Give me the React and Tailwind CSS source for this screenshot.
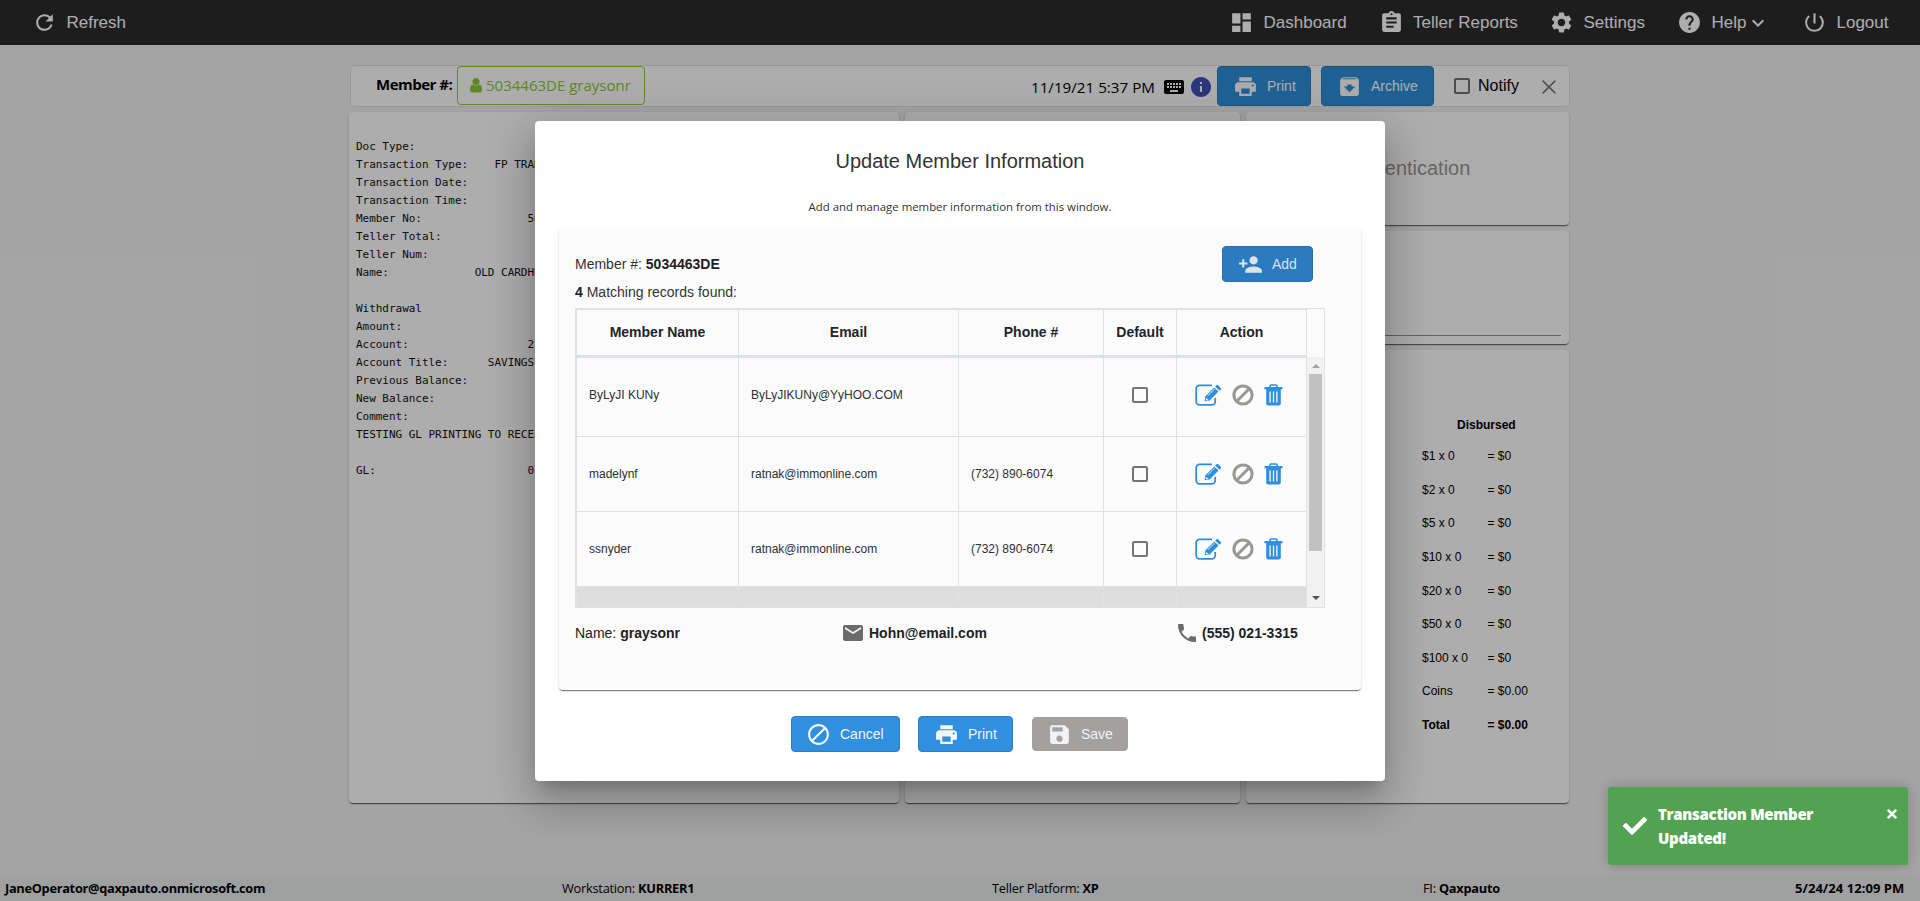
import React from 'react';
import {
  MdRefresh, MdDashboard, MdAssignment, MdSettings, MdHelp, MdExpandMore, MdPowerSettingsNew,
  MdKeyboard, MdInfo, MdPrint, MdArchive, MdPersonAdd, MdBlock, MdSave, MdEmail, MdPhone,
} from 'react-icons/md';
import { FaCheck, FaTimes } from 'react-icons/fa';

const receipt = [
  'Doc Type:',
  'Transaction Type:    FP TRAN',
  'Transaction Date:',
  'Transaction Time:',
  'Member No:                50',
  'Teller Total:',
  'Teller Num:',
  'Name:             OLD CARDHO',
  '',
  'Withdrawal',
  'Amount:',
  'Account:                  2',
  'Account Title:      SAVINGS',
  'Previous Balance:',
  'New Balance:',
  'Comment:',
  'TESTING GL PRINTING TO RECEI',
  '',
  'GL:                       0',
].join('\n');

const cash = [
  ['$1 x 0', '= $0'],
  ['$2 x 0', '= $0'],
  ['$5 x 0', '= $0'],
  ['$10 x 0', '= $0'],
  ['$20 x 0', '= $0'],
  ['$50 x 0', '= $0'],
  ['$100 x 0', '= $0'],
  ['Coins', '= $0.00'],
];

const members = [
  { name: 'ByLyJI KUNy', email: 'ByLyJIKUNy@YyHOO.COM', phone: '', h: 'h-[79px]', pad: 'pb-[5px]' },
  { name: 'madelynf', email: 'ratnak@immonline.com', phone: '(732) 890-6074', h: 'h-[75px]', pad: '' },
  { name: 'ssnyder', email: 'ratnak@immonline.com', phone: '(732) 890-6074', h: 'h-[75px]', pad: '' },
];

const COLS = 'grid grid-cols-[162px_220px_145px_73px_130px]';
const CARD = 'rounded-[4px] bg-white shadow-[0_2px_1px_-1px_rgba(0,0,0,0.4),0_1px_1px_0_rgba(0,0,0,0.25),0_1px_3px_0_rgba(0,0,0,0.14)]';
const SEGOE = "font-['Open_Sans','Noto_Sans',sans-serif]";

function NavItem({ icon: Icon, label, width, children }) {
  return (
    <div className={`flex shrink-0 items-center ${width}`}>
      <Icon size={25} className="shrink-0" />
      <span className="ml-[9.5px] whitespace-nowrap text-[17px] leading-6">{label}</span>
      {children}
    </div>
  );
}

function UserIcon() {
  return (
    <svg width="12" height="14.4" viewBox="256 128 1280 1536" fill="currentColor" className="shrink-0">
      <path d="M1536 1399q0 109-62.5 187t-150.5 78h-854q-88 0-150.5-78t-62.5-187q0-85 8.5-160.5t31.5-152 58.5-131 94-89 134.5-34.5q131 128 313 128t313-128q76 0 134.5 34.5t94 89 58.5 131 31.5 152 8.5 160.5zm-256-887q0 159-112.5 271.5t-271.5 112.5-271.5-112.5-112.5-271.5 112.5-271.5 271.5-112.5 271.5 112.5 112.5 271.5z" />
    </svg>
  );
}

function EditIcon() {
  return (
    <svg width="27" height="22" viewBox="0 0 27 22" fill="none" className="shrink-0">
      <path d="M17 1.4H4.6A3.4 3.4 0 0 0 1.2 4.800v12.600a3.4 3.4 0 0 0 3.4 3.400h12.200a3.4 3.4 0 0 0 3.400-3.400V14" stroke="#2f8edf" strokeWidth="1.8" />
      <path d="M10.500 12.200 19.300 3.400l4.200 4.200-8.800 8.800-5 .9z" fill="#2f8edf" />
      <path d="m20.200 2.500 1.300-1.300q.8-.7 1.600.1l2.600 2.600q.8.8.1 1.600l-1.300 1.300z" fill="#2f8edf" />
      <path d="m13 11.700 6.800-6.800" stroke="#fafafa" strokeWidth=".8" />
      <path d="m11.300 13.900 2.200 2.100-1.900.4-.8-.7z" fill="#fafafa" />
    </svg>
  );
}

function BanIcon() {
  return (
    <svg width="22" height="22" viewBox="0 0 22 22" fill="none" stroke="#989894" strokeWidth="3" className="shrink-0">
      <circle cx="11" cy="11" r="9.1" />
      <path d="M4.800 17.200 17.200 4.800" />
    </svg>
  );
}

function TrashIcon() {
  return (
    <svg width="19" height="22" viewBox="0 0 19 22" fill="none" className="shrink-0">
      <path d="M6 3.500V2q0-1 1-1h5q1 0 1 1v1.500" stroke="#2f8edf" strokeWidth="1.600" />
      <path d="M1.200 3h16.600q.8 0 .8.800v1.500H.4V3.800q0-.8.8-.8z" fill="#2f8edf" />
      <path d="M2.200 5h14.600v14.500q0 2-2 2H4.200q-2 0-2-2z" fill="#2f8edf" />
      <path d="M6.100 7.500v11M9.500 7.500v11M12.900 7.500v11" stroke="#fafafa" strokeWidth="1.300" />
    </svg>
  );
}

function Checkbox() {
  return <span className="block size-4 shrink-0 rounded-[2px] border-2 border-[#747474]" />;
}

function ActionButton({ icon: Icon, label, className }) {
  return (
    <button className={`flex shrink-0 items-center rounded-[4px] border text-[14px] leading-5 ${className}`}>
      <Icon size={25} className="shrink-0" />
      <span className="whitespace-nowrap">{label}</span>
    </button>
  );
}

function Page() {
  return (
    <div className="flex h-[901px] w-[1920px] flex-col bg-[#f2f2f2] text-black">
      <header className="flex h-[45px] shrink-0 items-center bg-[#2c2c2c] pl-8 text-white">
        <NavItem icon={MdRefresh} label="Refresh" width="w-[1197px]" />
        <NavItem icon={MdDashboard} label="Dashboard" width="w-[149.500px]" />
        <NavItem icon={MdAssignment} label="Teller Reports" width="w-[170.500px]" />
        <NavItem icon={MdSettings} label="Settings" width="w-[128px]" />
        <NavItem icon={MdHelp} label="Help" width="w-[125px]">
          <MdExpandMore size={24} className="shrink-0" />
        </NavItem>
        <NavItem icon={MdPowerSettingsNew} label="Logout" width="w-[100px]" />
      </header>

      <main className="flex grow flex-col pl-[349px] pt-5">
        <div className="ml-px flex h-[42px] w-[1220px] items-center rounded-[4px] border border-[#e0e0e0] bg-white">
          <span className={`w-[106px] shrink-0 whitespace-nowrap pb-1 pl-[25px] text-[15px] font-bold tracking-[-0.5px] ${SEGOE}`}>
            Member #:
          </span>
          <div className={`flex h-[39px] w-[188px] shrink-0 items-center self-start rounded-[4px] border border-[#8fc73a] pl-3 text-[#8fc73a] ${SEGOE}`}>
            <UserIcon />
            <span className="ml-[4px] whitespace-nowrap text-[15px]">5034463DE graysonr</span>
          </div>
          <span className={`ml-[386px] w-[131px] shrink-0 whitespace-nowrap pt-[2px] text-[15.200px] ${SEGOE}`}>11/19/21 5:37 PM</span>
          <MdKeyboard size={24} className="mt-[2px] shrink-0" />
          <MdInfo size={24} className="ml-[3px] mt-[2px] shrink-0 text-[#3f51b5]" />
          <ActionButton icon={MdPrint} label="Print" className="ml-[4px] h-10 w-[94px] gap-[9px] border-[#2a7cc2] bg-[#308fdb] pl-[15px] text-white" />
          <ActionButton icon={MdArchive} label="Archive" className="ml-[10px] h-10 w-[113px] gap-[9px] border-[#2a7cc2] bg-[#308fdb] pl-[15px] text-white" />
          <span className="ml-5"><Checkbox /></span>
          <span className="ml-2 w-[64px] shrink-0 text-[16px]">Notify</span>
          <svg width="14" height="14" viewBox="0 0 14 14" className="mt-[2px] shrink-0" stroke="#757a7d" strokeWidth="1.500">
            <path d="M.6.6l12.800 12.800M13.400.6.6 13.400" />
          </svg>
        </div>

        <div className="mt-[5px] flex gap-[6px]">
          <section className={`h-[691px] w-[550px] ${CARD}`}>
            <pre className="pl-[7px] pt-[26px] font-['DejaVu_Sans_Mono',monospace] text-[11px] leading-[18px] tracking-[-0.030px] text-[#111]">{receipt}</pre>
          </section>
          <section className={`h-[691px] w-[335px] ${CARD}`} />
          <div className="flex w-[323px] flex-col gap-[6px]">
            <section className={`h-[113px] pr-px pt-[42px] text-center text-[20px] leading-7 text-[#969696] ${CARD}`}>Authentication</section>
            <section className={`h-[113px] px-2 pt-[104px] ${CARD}`}>
              <div className="border-t border-[#949494]" />
            </section>
            <section className={`h-[453px] pt-[66px] text-[12px] ${CARD}`}>
              <div className="pl-[211px] font-bold leading-[18px]">Disbursed</div>
              <div className="mt-[5.500px]">
                {cash.map(([a, b], i) => (
                  <div key={i} className="flex h-[33.600px] items-center pl-[176px]">
                    <span className="w-[65.500px]">{a}</span>
                    <span>{b}</span>
                  </div>
                ))}
                <div className="flex h-[33.600px] items-center pl-[176px] font-bold">
                  <span className="w-[65.500px]">Total</span>
                  <span>= $0.00</span>
                </div>
              </div>
            </section>
          </div>
        </div>
      </main>

      <footer className={`flex h-[26px] shrink-0 items-center whitespace-nowrap bg-[#ebeded] pl-[5px] pt-px text-[12.800px] tracking-[-0.250px] ${SEGOE}`}>
        <b className="w-[557px] tracking-[-0.300px]">JaneOperator@qaxpauto.onmicrosoft.com</b>
        <span className="w-[430px]">Workstation: <b>KURRER1</b></span>
        <span className="w-[431px]">Teller Platform: <b>XP</b></span>
        <span className="w-[372px]">FI: <b>Qaxpauto</b></span>
        <b className="text-[13px] tracking-[0.050px]">5/24/24 12:09 PM</b>
      </footer>
    </div>
  );
}

function MemberTable() {
  return (
    <div className="flex h-[300px] w-[750px] border border-[#dee2e6]">
      <div className="w-[731px] overflow-hidden border-l border-t border-[#dee2e6]">
        <div className={`${COLS} h-[48px] border-b-[3px] border-[#dee2e6] text-center text-[14px] font-bold text-[#212529] [&>*]:border-r [&>*]:border-[#dee2e6] [&>*]:pt-[12px]`}>
          <div>Member Name</div>
          <div>Email</div>
          <div>Phone #</div>
          <div>Default</div>
          <div>Action</div>
        </div>
        {members.map((m) => (
          <div key={m.name} className={`${COLS} ${m.h} border-b border-[#dee2e6] text-[12px] text-[#2c3034] [&>*]:flex [&>*]:items-center [&>*]:border-r [&>*]:border-[#dee2e6]`}>
            <div className={`pl-3 ${m.pad}`}>{m.name}</div>
            <div className={`pl-3 ${m.pad}`}>{m.email}</div>
            <div className={`pl-3 ${m.pad}`}>{m.phone}</div>
            <div className={`justify-center ${m.pad}`}><Checkbox /></div>
            <div className={`pl-[18px] ${m.pad}`}>
              <EditIcon />
              <span className="ml-[10px]"><BanIcon /></span>
              <span className="ml-[10px]"><TrashIcon /></span>
            </div>
          </div>
        ))}
        <div className={`${COLS} h-[22px] bg-[#dddddd] [&>*]:border-r [&>*]:border-[#dee2e6]`}>
          <div /><div /><div /><div /><div />
        </div>
      </div>
      <div className="flex w-[17px] flex-col pt-[48px]">
        <div className="flex grow flex-col items-center justify-between bg-[#f1f1f1] pb-[7px] pt-[7px]">
          <div className="flex flex-col items-center gap-[6px]">
            <svg width="8" height="4" viewBox="0 0 8 4"><path d="M0 4 4 0l4 4z" fill="#a3a3a3" /></svg>
            <div className="h-[177px] w-[13px] bg-[#c1c1c1]" />
          </div>
          <svg width="8" height="4" viewBox="0 0 8 4"><path d="M0 0h8L4 4z" fill="#505050" /></svg>
        </div>
      </div>
    </div>
  );
}

function MemberDialog() {
  return (
    <div className="flex h-[660px] w-[850px] flex-col rounded-[4px] bg-white text-[#212121] shadow-[0_11px_15px_-7px_rgba(0,0,0,0.2),0_24px_38px_3px_rgba(0,0,0,0.14),0_9px_46px_8px_rgba(0,0,0,0.12)]">
      <h1 className="pt-[26px] text-center text-[20px] leading-7 text-[#333]">Update Member Information</h1>
      <p className={`mt-[23px] text-center text-[11.400px] leading-[18px] text-[#333] ${SEGOE}`}>Add and manage member information from this window.</p>
      <div className="ml-6 mt-[13px] h-[461px] w-[802px] rounded-[4px] bg-[#fbfbfb] pl-4 shadow-[0_2px_1px_-1px_rgba(0,0,0,0.35),0_1px_1px_0_rgba(0,0,0,0.2),0_1px_3px_0_rgba(0,0,0,0.12)]">
        <div className="flex h-[79px] pt-[17px] text-[14px]">
          <div className="w-[647px] pt-[4px] leading-7 text-[#333]">
            <div>Member #: <b className="text-[#212121]">5034463DE</b></div>
            <div><b className="text-[#212121]">4</b> Matching records found:</div>
          </div>
          <ActionButton icon={MdPersonAdd} label="Add" className="h-9 w-[91px] gap-[9px] border-[#2470b0] bg-[#2b7bc1] pl-[15px] text-[#dfe3e7]" />
        </div>
        <MemberTable />
        <div className="flex items-center pt-[13px] text-[14px] leading-6 [&_svg]:text-[#6b6b6b]">
          <span className="w-[266px]">Name: <b>graysonr</b></span>
          <MdEmail size={24} />
          <b className="ml-1 w-[305.500px]">Hohn@email.com</b>
          <MdPhone size={24} />
          <b className="ml-[3.500px]">(555) 021-3315</b>
        </div>
      </div>
      <div className="mt-[26px] flex items-center pl-[256px]">
        <ActionButton icon={MdBlock} label="Cancel" className="h-9 w-[109px] gap-[9px] border-[#2a7fc9] bg-[#308fdf] pl-[14px] text-[#f2f6fa]" />
        <ActionButton icon={MdPrint} label="Print" className="ml-[18px] h-9 w-[95px] gap-[9px] border-[#2a7fc9] bg-[#308fdf] pl-[15px] text-[#f2f6fa]" />
        <ActionButton icon={MdSave} label="Save" className="ml-[19px] h-[34px] w-[96px] gap-[9px] border-[#a3a19f] bg-[#a3a19f] pl-[14px] text-[#f2f2f2]" />
      </div>
    </div>
  );
}

function Toast() {
  return (
    <div className={`flex h-[78px] w-[300px] rounded-[3px] bg-[#51a351] text-white shadow-[0_0_12px_rgba(0,0,0,0.2)] ${SEGOE}`}>
      <FaCheck size={24} className="ml-[15px] mt-[27px] shrink-0" />
      <div className="ml-[11px] mt-[15px] w-[228px] text-[15px] font-extrabold leading-6 tracking-[-0.300px]">
        Transaction Member<br />Updated!
      </div>
      <FaTimes size={14} className="mt-[20px] shrink-0 ml-[-1px]" />
    </div>
  );
}

export default function App() {
  return (
    <div className="relative h-[901px] w-[1920px] overflow-hidden font-['Liberation_Sans',Arial,sans-serif]">
      <Page />
      <div className="absolute inset-0 flex items-start justify-center bg-black/32 pt-[121px]">
        <MemberDialog />
      </div>
      <div className="absolute left-[1608px] top-[787px]">
        <Toast />
      </div>
    </div>
  );
}
